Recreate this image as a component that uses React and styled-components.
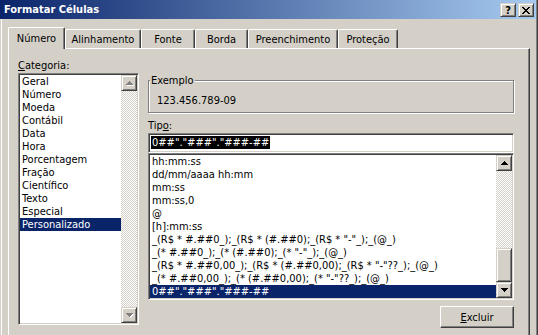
import React from 'react';
import styled, { createGlobalStyle } from 'styled-components';

const FACE = '#d4d0c8';
const SHADOW = '#808080';
const DARK = '#404040';
const HILITE = '#0a246a';
const FONT = `"DejaVu Sans Condensed", "DejaVu Sans", "Liberation Sans", sans-serif`;

const Global = createGlobalStyle`
  html, body { margin: 0; padding: 0; background: ${FACE}; }
  body {
    font-family: ${FONT};
    font-stretch: condensed;
    font-size: 11px;
    color: #000;
    overflow: hidden;
  }
  #root { width: 538px; height: 335px; }
`;

const Window = styled.div`
  width: 538px;
  height: 335px;
  overflow: hidden;
  background: ${FACE};
  display: flex;
  flex-direction: column;
  box-shadow: inset 1px 0 0 ${FACE}, inset 2px 0 0 #fff, inset -1px 0 0 ${DARK},
    inset -2px 0 0 ${SHADOW};
`;

const TitleBar = styled.div`
  height: 19px;
  flex: none;
  margin-right: 2px;
  padding: 0 2px 0 4px;
  display: flex;
  align-items: center;
  background: linear-gradient(to right, #0a246a, #a6caf0);
  color: #fff;
  font-weight: bold;
`;

const TitleText = styled.div`
  flex: 1;
  line-height: 13px;
`;

const CaptionButtons = styled.div`
  display: flex;
  gap: 2px;
`;

const CaptionButton = styled.div`
  box-sizing: border-box;
  width: 16px;
  height: 14px;
  background: ${FACE};
  border: 1px solid;
  border-color: ${FACE} ${DARK} ${DARK} ${FACE};
  box-shadow: inset 1px 1px 0 #fff, inset -1px -1px 0 ${SHADOW};
  display: flex;
  align-items: center;
  justify-content: center;
  color: #000;
  font-weight: bold;
  font-size: 11px;
  line-height: 11px;
  padding-top: 1px;
`;

const TabStrip = styled.div`
  flex: none;
  height: 21px;
  margin-top: 8px;
  padding-left: 8px;
  display: flex;
  align-items: flex-end;
`;

const Tab = styled.div`
  box-sizing: border-box;
  width: ${(p) => p.$w}px;
  height: ${(p) => (p.$active ? 22 : 19)}px;
  margin-bottom: ${(p) => (p.$active ? -1 : 0)}px;
  position: relative;
  z-index: ${(p) => (p.$active ? 1 : 0)};
  background: ${FACE};
  border-top: 1px solid #fff;
  border-left: 1px solid #fff;
  border-right: 1px solid ${DARK};
  border-radius: 2px 2px 0 0;
  box-shadow: inset -1px 0 0 ${SHADOW};
  display: flex;
  align-items: center;
  justify-content: center;
  line-height: 13px;
  white-space: nowrap;
`;

const Panel = styled.div`
  flex: 1;
  box-sizing: border-box;
  width: 522px;
  margin-left: 8px;
  border-top: 1px solid #fff;
  border-left: 1px solid #fff;
  border-right: 1px solid ${DARK};
  box-shadow: inset -1px 0 0 ${SHADOW};
  padding: 10px 0 0 9px;
  display: flex;
  gap: 9px;
`;

const Column = styled.div`
  width: ${(p) => p.$w}px;
  flex: none;
  display: flex;
  flex-direction: column;
`;

const Label = styled.div`
  height: 13px;
  line-height: 13px;
  margin-top: ${(p) => p.$mt || 0}px;
  white-space: nowrap;
  u { text-decoration: underline; text-underline-offset: 1px; }
`;

const ListBox = styled.div`
  box-sizing: border-box;
  height: ${(p) => p.$h}px;
  margin-top: 1px;
  background: #fff;
  border: 1px solid;
  border-color: ${SHADOW} #fff #fff ${SHADOW};
  box-shadow: inset 1px 1px 0 ${DARK}, inset -1px -1px 0 ${FACE};
  padding: 1px;
  display: flex;
`;

const Items = styled.div`
  flex: 1;
  min-width: 0;
  overflow: hidden;
`;

const Item = styled.div`
  height: 13px;
  line-height: 13px;
  padding-left: 2px;
  white-space: nowrap;
  background: ${(p) => (p.$selected ? HILITE : 'transparent')};
  color: ${(p) => (p.$selected ? '#fff' : '#000')};
`;

const ScrollBar = styled.div`
  width: 16px;
  flex: none;
  display: flex;
  flex-direction: column;
`;

const ScrollButton = styled.div`
  box-sizing: border-box;
  width: 16px;
  height: 16px;
  flex: none;
  background: ${FACE};
  border: 1px solid;
  border-color: ${FACE} ${DARK} ${DARK} ${FACE};
  box-shadow: inset 1px 1px 0 #fff, inset -1px -1px 0 ${SHADOW};
  display: flex;
  align-items: center;
  justify-content: center;
`;

const Track = styled.div`
  flex: 1;
  background: repeating-conic-gradient(#fff 0 25%, ${FACE} 0 50%) 0 0 / 2px 2px;
`;

const Thumb = styled(ScrollButton)`
  height: ${(p) => p.$h}px;
`;

const GroupBox = styled.fieldset`
  margin: 15px 0 0 0;
  padding: 0;
  min-width: 0;
  border: 1px solid ${SHADOW};
  box-shadow: inset 1px 1px 0 #fff, 1px 1px 0 #fff;
`;

const Legend = styled.legend`
  margin-left: 1px;
  padding: 0 1px;
  line-height: 13px;
  background: ${FACE};
`;

const Sample = styled.div`
  padding: 7px 0 5px 8px;
  line-height: 13px;
`;

const TextBox = styled.div`
  box-sizing: border-box;
  height: 20px;
  margin-top: 1px;
  background: #fff;
  border: 1px solid;
  border-color: ${SHADOW} #fff #fff ${SHADOW};
  box-shadow: inset 1px 1px 0 ${DARK}, inset -1px -1px 0 ${FACE};
  padding: 2px 0 0 1px;
  display: flex;
  align-items: flex-start;
`;

const Selection = styled.span`
  line-height: 13px;
  padding: 0 1px;
  background: #000;
  color: #fff;
  white-space: nowrap;
  border-left: 1px solid #fff;
`;

const PushButton = styled.button`
  align-self: flex-end;
  box-sizing: border-box;
  width: 74px;
  height: 22px;
  margin-top: 6px;
  padding: 0;
  font: inherit;
  color: #000;
  background: ${FACE};
  border: 1px solid;
  border-color: #fff ${DARK} ${DARK} #fff;
  box-shadow: inset -1px -1px 0 ${SHADOW};
  u { text-decoration: underline; text-underline-offset: 1px; }
`;

const UP = 'M3 0h1v1H3zM2 1h3v1H2zM1 2h5v1H1zM0 3h7v1H0z';
const DOWN = 'M0 0h7v1H0zM1 1h5v1H1zM2 2h3v1H2zM3 3h1v1H3z';

const Arrow = ({ dir, disabled }) => (
  <svg width="8" height="5" viewBox="0 0 8 5" shapeRendering="crispEdges" style={{ marginLeft: 1, marginTop: dir === 'up' ? 0 : 1 }}>
    {disabled && <path d={dir === 'up' ? UP : DOWN} fill="#fff" transform="translate(1 1)" />}
    <path d={dir === 'up' ? UP : DOWN} fill={disabled ? SHADOW : '#000'} />
  </svg>
);

const CloseGlyph = () => (
  <svg width="8" height="7" viewBox="0 0 8 7" shapeRendering="crispEdges">
    <path
      d="M0 0h2v1H0zM6 0h2v1H6zM1 1h2v1H1zM5 1h2v1H5zM2 2h4v1H2zM3 3h2v1H3zM2 4h4v1H2zM1 5h2v1H1zM5 5h2v1H5zM0 6h2v1H0zM6 6h2v1H6z"
      fill="#000"
    />
  </svg>
);

const tabs = [
  { label: 'Número', w: 57, active: true },
  { label: 'Alinhamento', w: 76 },
  { label: 'Fonte', w: 54 },
  { label: 'Borda', w: 53 },
  { label: 'Preenchimento', w: 90 },
  { label: 'Proteção', w: 60 },
];

const categories = [
  'Geral', 'Número', 'Moeda', 'Contábil', 'Data', 'Hora', 'Porcentagem',
  'Fração', 'Científico', 'Texto', 'Especial', 'Personalizado',
];

const formats = [
  'hh:mm:ss',
  'dd/mm/aaaa hh:mm',
  'mm:ss',
  'mm:ss,0',
  '@',
  '[h]:mm:ss',
  '_(R$ * #.##0_);_(R$ * (#.##0);_(R$ * "-"_);_(@_)',
  '_(* #.##0_);_(* (#.##0);_(* "-"_);_(@_)',
  '_(R$ * #.##0,00_);_(R$ * (#.##0,00);_(R$ * "-"??_);_(@_)',
  '_(* #.##0,00_);_(* (#.##0,00);_(* "-"??_);_(@_)',
  '0##"."###"."###-##',
];

export default function App() {
  return (
    <>
      <Global />
      <Window>
        <TitleBar>
          <TitleText>Formatar Células</TitleText>
          <CaptionButtons>
            <CaptionButton>?</CaptionButton>
            <CaptionButton><CloseGlyph /></CaptionButton>
          </CaptionButtons>
        </TitleBar>
        <TabStrip>
          {tabs.map((t) => (
            <Tab key={t.label} $w={t.w} $active={t.active}>{t.label}</Tab>
          ))}
        </TabStrip>
        <Panel>
          <Column $w={121}>
            <Label><u>C</u>ategoria:</Label>
            <ListBox $h={252}>
              <Items>
                {categories.map((c) => (
                  <Item key={c} $selected={c === 'Personalizado'}>{c}</Item>
                ))}
              </Items>
              <ScrollBar>
                <ScrollButton><Arrow dir="up" disabled /></ScrollButton>
                <Track />
                <ScrollButton><Arrow dir="down" disabled /></ScrollButton>
              </ScrollBar>
            </ListBox>
          </Column>
          <Column $w={366}>
            <GroupBox>
              <Legend>Exemplo</Legend>
              <Sample>123.456.789-09</Sample>
            </GroupBox>
            <Label $mt={6}>Tip<u>o</u>:</Label>
            <TextBox>
              <Selection>0##"."###"."###-##</Selection>
            </TextBox>
            <ListBox $h={147} style={{ marginTop: 0 }}>
              <Items>
                {formats.map((f, i) => (
                  <Item key={f} $selected={i === formats.length - 1}>{f}</Item>
                ))}
              </Items>
              <ScrollBar>
                <ScrollButton><Arrow dir="up" /></ScrollButton>
                <Track />
                <Thumb $h={34} />
                <ScrollButton><Arrow dir="down" /></ScrollButton>
              </ScrollBar>
            </ListBox>
            <PushButton><u>E</u>xcluir</PushButton>
          </Column>
        </Panel>
      </Window>
    </>
  );
}
